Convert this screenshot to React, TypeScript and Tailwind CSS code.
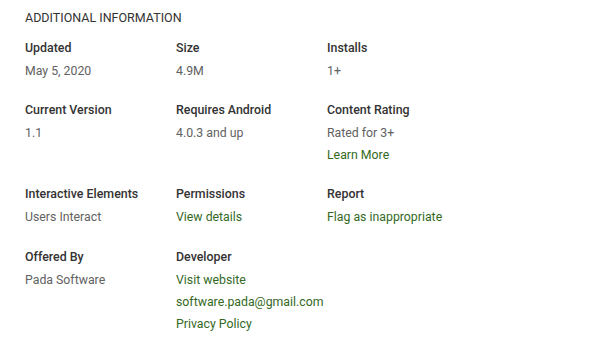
import React from "react";

type Cell = { label: string; values: { text: string; link?: boolean }[] };

const rows: Cell[][] = [
  [
    { label: "Updated", values: [{ text: "May 5, 2020" }] },
    { label: "Size", values: [{ text: "4.9M" }] },
    { label: "Installs", values: [{ text: "1+" }] },
  ],
  [
    { label: "Current Version", values: [{ text: "1.1" }] },
    { label: "Requires Android", values: [{ text: "4.0.3 and up" }] },
    { label: "Content Rating", values: [{ text: "Rated for 3+" }, { text: "Learn More", link: true }] },
  ],
  [
    { label: "Interactive Elements", values: [{ text: "Users Interact" }] },
    { label: "Permissions", values: [{ text: "View details", link: true }] },
    { label: "Report", values: [{ text: "Flag as inappropriate", link: true }] },
  ],
  [
    { label: "Offered By", values: [{ text: "Pada Software" }] },
    {
      label: "Developer",
      values: [
        { text: "Visit website", link: true },
        { text: "software.pada@gmail.com", link: true },
        { text: "Privacy Policy", link: true },
      ],
    },
  ],
];

export default function App() {
  return (
    <div
      className="w-[600px] h-[338px] bg-white overflow-hidden pl-[25px] pt-[8px]"
      style={{ fontFamily: "Roboto, 'Noto Sans', sans-serif" }}
    >
      <div className="text-[12.5px] leading-[20px] text-[#333333] uppercase">
        Additional Information
      </div>
      <div className="mt-[10px] flex flex-col gap-[18px]">
        {rows.map((row, i) => (
          <div key={i} className={"grid grid-cols-[151px_151px_151px] " + (i === 3 ? "mt-[1px]" : "")}>
            {row.map((c) => (
              <div key={c.label} className="flex flex-col">
                <div className="text-[12.4px] leading-[20px] font-medium text-[#333333]">{c.label}</div>
                <div className="mt-[2px] flex flex-col">
                  {c.values.map((v) => (
                    <div
                      key={v.text}
                      className={
                        "text-[12.3px] leading-[22px] " + (v.link ? "text-[#33691e]" : "text-[#616161]")
                      }
                    >
                      {v.text}
                    </div>
                  ))}
                </div>
              </div>
            ))}
          </div>
        ))}
      </div>
    </div>
  );
}
